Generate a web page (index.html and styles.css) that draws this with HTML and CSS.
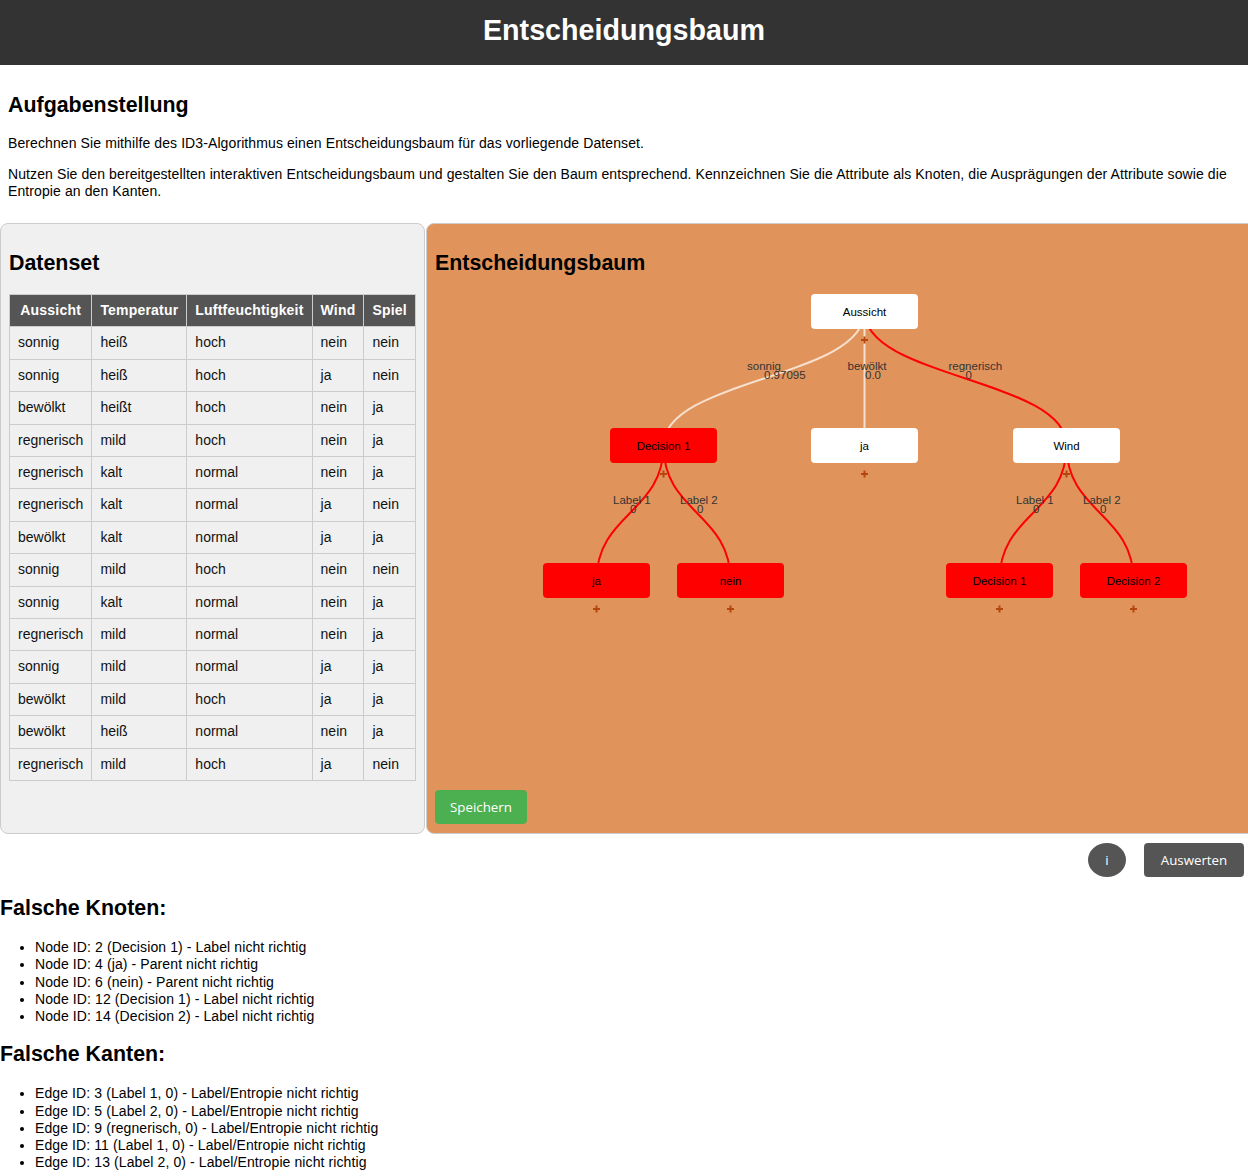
FILE: index.html
```html
<!DOCTYPE html>
<html lang="de">
<head>
<meta charset="utf-8">
<title>Entscheidungsbaum</title>
<link rel="stylesheet" href="styles.css">
</head>
<body>
<header class="topbar"><h1 class="topbar-title">Entscheidungsbaum</h1></header>

<section class="task">
  <h2 class="heading">Aufgabenstellung</h2>
  <p class="task-text">Berechnen Sie mithilfe des ID3-Algorithmus einen Entscheidungsbaum für das vorliegende Datenset.</p>
  <p class="task-text">Nutzen Sie den bereitgestellten interaktiven Entscheidungsbaum und gestalten Sie den Baum entsprechend. Kennzeichnen Sie die Attribute als Knoten, die Ausprägungen der Attribute sowie die Entropie an den Kanten.</p>
</section>

<main class="workspace">
  <section class="panel panel-data">
    <h2 class="heading">Datenset</h2>
    <table class="data-table">
      <thead>
        <tr><th>Aussicht</th><th>Temperatur</th><th>Luftfeuchtigkeit</th><th>Wind</th><th>Spiel</th></tr>
      </thead>
      <tbody>
        <tr><td>sonnig</td><td>heiß</td><td>hoch</td><td>nein</td><td>nein</td></tr>
        <tr><td>sonnig</td><td>heiß</td><td>hoch</td><td>ja</td><td>nein</td></tr>
        <tr><td>bewölkt</td><td>heißt</td><td>hoch</td><td>nein</td><td>ja</td></tr>
        <tr><td>regnerisch</td><td>mild</td><td>hoch</td><td>nein</td><td>ja</td></tr>
        <tr><td>regnerisch</td><td>kalt</td><td>normal</td><td>nein</td><td>ja</td></tr>
        <tr><td>regnerisch</td><td>kalt</td><td>normal</td><td>ja</td><td>nein</td></tr>
        <tr><td>bewölkt</td><td>kalt</td><td>normal</td><td>ja</td><td>ja</td></tr>
        <tr><td>sonnig</td><td>mild</td><td>hoch</td><td>nein</td><td>nein</td></tr>
        <tr><td>sonnig</td><td>kalt</td><td>normal</td><td>nein</td><td>ja</td></tr>
        <tr><td>regnerisch</td><td>mild</td><td>normal</td><td>nein</td><td>ja</td></tr>
        <tr><td>sonnig</td><td>mild</td><td>normal</td><td>ja</td><td>ja</td></tr>
        <tr><td>bewölkt</td><td>mild</td><td>hoch</td><td>ja</td><td>ja</td></tr>
        <tr><td>bewölkt</td><td>heiß</td><td>normal</td><td>nein</td><td>ja</td></tr>
        <tr><td>regnerisch</td><td>mild</td><td>hoch</td><td>ja</td><td>nein</td></tr>
      </tbody>
    </table>
  </section>

  <section class="panel panel-tree">
    <h2 class="heading">Entscheidungsbaum</h2>
    <svg class="tree" width="800" height="498" viewBox="0 0 800 498">
      <g class="links">
        <path class="link link-ok" d="M429.5,19.5 C429.5,86.5 228.5,86.5 228.5,153.5"/>
        <path class="link link-ok" d="M429.5,19.5 L429.5,153.5"/>
        <path class="link link-bad" d="M429.5,19.5 C429.5,86.5 631.5,86.5 631.5,153.5"/>
        <path class="link link-bad" d="M228.5,153.5 C228.5,221 161.5,221 161.5,288.5"/>
        <path class="link link-bad" d="M228.5,153.5 C228.5,221 295.5,221 295.5,288.5"/>
        <path class="link link-bad" d="M631.5,153.5 C631.5,221 564.5,221 564.5,288.5"/>
        <path class="link link-bad" d="M631.5,153.5 C631.5,221 698.5,221 698.5,288.5"/>
      </g>
      <g class="link-labels">
        <text class="edge-label" x="312" y="78">sonnig</text>
        <text class="edge-entropy" x="329" y="87">0.97095</text>
        <text class="edge-label" x="412.5" y="78">bewölkt</text>
        <text class="edge-entropy" x="430" y="87">0.0</text>
        <text class="edge-label" x="513.5" y="78">regnerisch</text>
        <text class="edge-entropy" x="530.5" y="87">0</text>
        <text class="edge-label" x="178" y="212">Label 1</text>
        <text class="edge-entropy" x="195" y="221">0</text>
        <text class="edge-label" x="245" y="212">Label 2</text>
        <text class="edge-entropy" x="262" y="221">0</text>
        <text class="edge-label" x="581" y="212">Label 1</text>
        <text class="edge-entropy" x="598" y="221">0</text>
        <text class="edge-label" x="648" y="212">Label 2</text>
        <text class="edge-entropy" x="665" y="221">0</text>
      </g>
      <g class="nodes">
        <rect class="node node-ok" x="376" y="2" width="107" height="35" rx="4"/>
        <text class="node-text" x="429.5" y="19.5">Aussicht</text>
        <rect class="node node-bad" x="175" y="136" width="107" height="35" rx="4"/>
        <text class="node-text" x="228.5" y="153.5">Decision 1</text>
        <rect class="node node-ok" x="376" y="136" width="107" height="35" rx="4"/>
        <text class="node-text" x="429.5" y="153.5">ja</text>
        <rect class="node node-ok" x="578" y="136" width="107" height="35" rx="4"/>
        <text class="node-text" x="631.5" y="153.5">Wind</text>
        <rect class="node node-bad" x="108" y="271" width="107" height="35" rx="4"/>
        <text class="node-text" x="161.5" y="288.5">ja</text>
        <rect class="node node-bad" x="242" y="271" width="107" height="35" rx="4"/>
        <text class="node-text" x="295.5" y="288.5">nein</text>
        <rect class="node node-bad" x="511" y="271" width="107" height="35" rx="4"/>
        <text class="node-text" x="564.5" y="288.5">Decision 1</text>
        <rect class="node node-bad" x="645" y="271" width="107" height="35" rx="4"/>
        <text class="node-text" x="698.5" y="288.5">Decision 2</text>
      </g>
      <g class="add-icons">
        <path class="add" d="M426,48 h7 M429.5,44.5 v7"/>
        <path class="add" d="M225,182 h7 M228.5,178.5 v7"/>
        <path class="add" d="M426,182 h7 M429.5,178.5 v7"/>
        <path class="add" d="M628,182 h7 M631.5,178.5 v7"/>
        <path class="add" d="M158,317 h7 M161.5,313.5 v7"/>
        <path class="add" d="M292,317 h7 M295.5,313.5 v7"/>
        <path class="add" d="M561,317 h7 M564.5,313.5 v7"/>
        <path class="add" d="M695,317 h7 M698.5,313.5 v7"/>
      </g>
    </svg>
    <button class="btn btn-save" type="button">Speichern</button>
  </section>
</main>

<div class="actions">
  <button class="btn btn-info" type="button">i</button>
  <button class="btn btn-eval" type="button">Auswerten</button>
</div>

<section class="results">
  <h2 class="heading heading-result">Falsche Knoten:</h2>
  <ul class="result-list">
    <li>Node ID: 2 (Decision 1) - Label nicht richtig</li>
    <li>Node ID: 4 (ja) - Parent nicht richtig</li>
    <li>Node ID: 6 (nein) - Parent nicht richtig</li>
    <li>Node ID: 12 (Decision 1) - Label nicht richtig</li>
    <li>Node ID: 14 (Decision 2) - Label nicht richtig</li>
  </ul>
  <h2 class="heading heading-result heading-next">Falsche Kanten:</h2>
  <ul class="result-list">
    <li>Edge ID: 3 (Label 1, 0) - Label/Entropie nicht richtig</li>
    <li>Edge ID: 5 (Label 2, 0) - Label/Entropie nicht richtig</li>
    <li>Edge ID: 9 (regnerisch, 0) - Label/Entropie nicht richtig</li>
    <li>Edge ID: 11 (Label 1, 0) - Label/Entropie nicht richtig</li>
    <li>Edge ID: 13 (Label 2, 0) - Label/Entropie nicht richtig</li>
  </ul>
</section>
</body>
</html>
```

FILE: styles.css
```css
html, body {
  margin: 0;
  padding: 0;
}

body {
  font-family: "Liberation Sans", Arial, sans-serif;
  font-size: 14px;
  letter-spacing: 0.1px;
  color: #000;
  background: #fff;
  overflow-x: hidden;
}

.topbar {
  background: #333;
  height: 65px;
  display: flex;
  align-items: center;
  justify-content: center;
}

.topbar-title {
  margin: 0 0 5px 0;
  color: #fff;
  font-size: 28.7px;
  font-weight: bold;
  letter-spacing: 0;
  line-height: 1;
}

.heading {
  font-size: 21.4px;
  font-weight: bold;
  letter-spacing: 0;
  margin: 17px 0;
  line-height: 24px;
}

.task {
  padding: 11px 8px 9px 8px;
}

.task .heading {
  margin-bottom: 18px;
}

.task-text {
  margin: 14px 0;
  line-height: 17px;
}

.workspace {
  display: flex;
  align-items: stretch;
  gap: 1px;
  width: 1300px;
}

.panel {
  box-sizing: border-box;
  border: 1px solid #ccc;
  border-radius: 8px;
  padding: 10px 8px 9px 8px;
}

.panel-data {
  flex: 0 0 425px;
  min-width: 0;
  background: #f0f0f0;
}

.panel-tree {
  flex: 0 0 840px;
  background: #e0945c;
}

.data-table {
  border-collapse: collapse;
  margin-top: 19px;
  letter-spacing: 0;
}

.data-table th,
.data-table td {
  border: 1px solid #ccc;
  padding: 8px;
  line-height: 15.4px;
  white-space: nowrap;
}

.data-table th {
  background: #555;
  color: #fff;
  font-weight: bold;
  letter-spacing: 0.2px;
  text-align: center;
}

.data-table td {
  text-align: left;
  color: #111;
}

.tree {
  display: block;
  overflow: visible;
}

.link {
  fill: none;
  stroke-width: 2px;
}

.link-ok {
  stroke: #f6dfcd;
}

.link-bad {
  stroke: #ff0000;
}

.edge-label,
.edge-entropy {
  font-family: "Liberation Sans", Arial, sans-serif;
  font-size: 11.5px;
  letter-spacing: 0;
  fill: #333;
}

.node-ok {
  fill: #fff;
}

.node-bad {
  fill: #ff0000;
}

.node-text {
  font-family: "Liberation Sans", Arial, sans-serif;
  font-size: 11.5px;
  letter-spacing: 0;
  fill: #000;
  text-anchor: middle;
  dominant-baseline: central;
}

.add {
  stroke: #b4460f;
  stroke-width: 2px;
  fill: none;
}

.btn {
  font-family: "Open Sans", "Liberation Sans", sans-serif;
  font-size: 13.3px;
  letter-spacing: 0;
  color: #fff;
  border: none;
  border-radius: 4px;
  height: 34px;
  padding: 0;
  cursor: pointer;
}

.btn-save {
  background: #4caf50;
  width: 92px;
}

.actions {
  display: flex;
  justify-content: flex-end;
  gap: 18px;
  margin: 9px 4px 0 0;
}

.btn-info {
  background: #555;
  border-radius: 50%;
  width: 38px;
}

.btn-eval {
  background: #555;
  width: 100px;
}

.results {
  padding: 0;
}

.heading-result {
  margin: 19px 0;
}

.heading-next {
  margin-top: 17px;
}

.result-list {
  margin: 14px 0;
  padding-left: 35px;
  line-height: 17.25px;
}
```
